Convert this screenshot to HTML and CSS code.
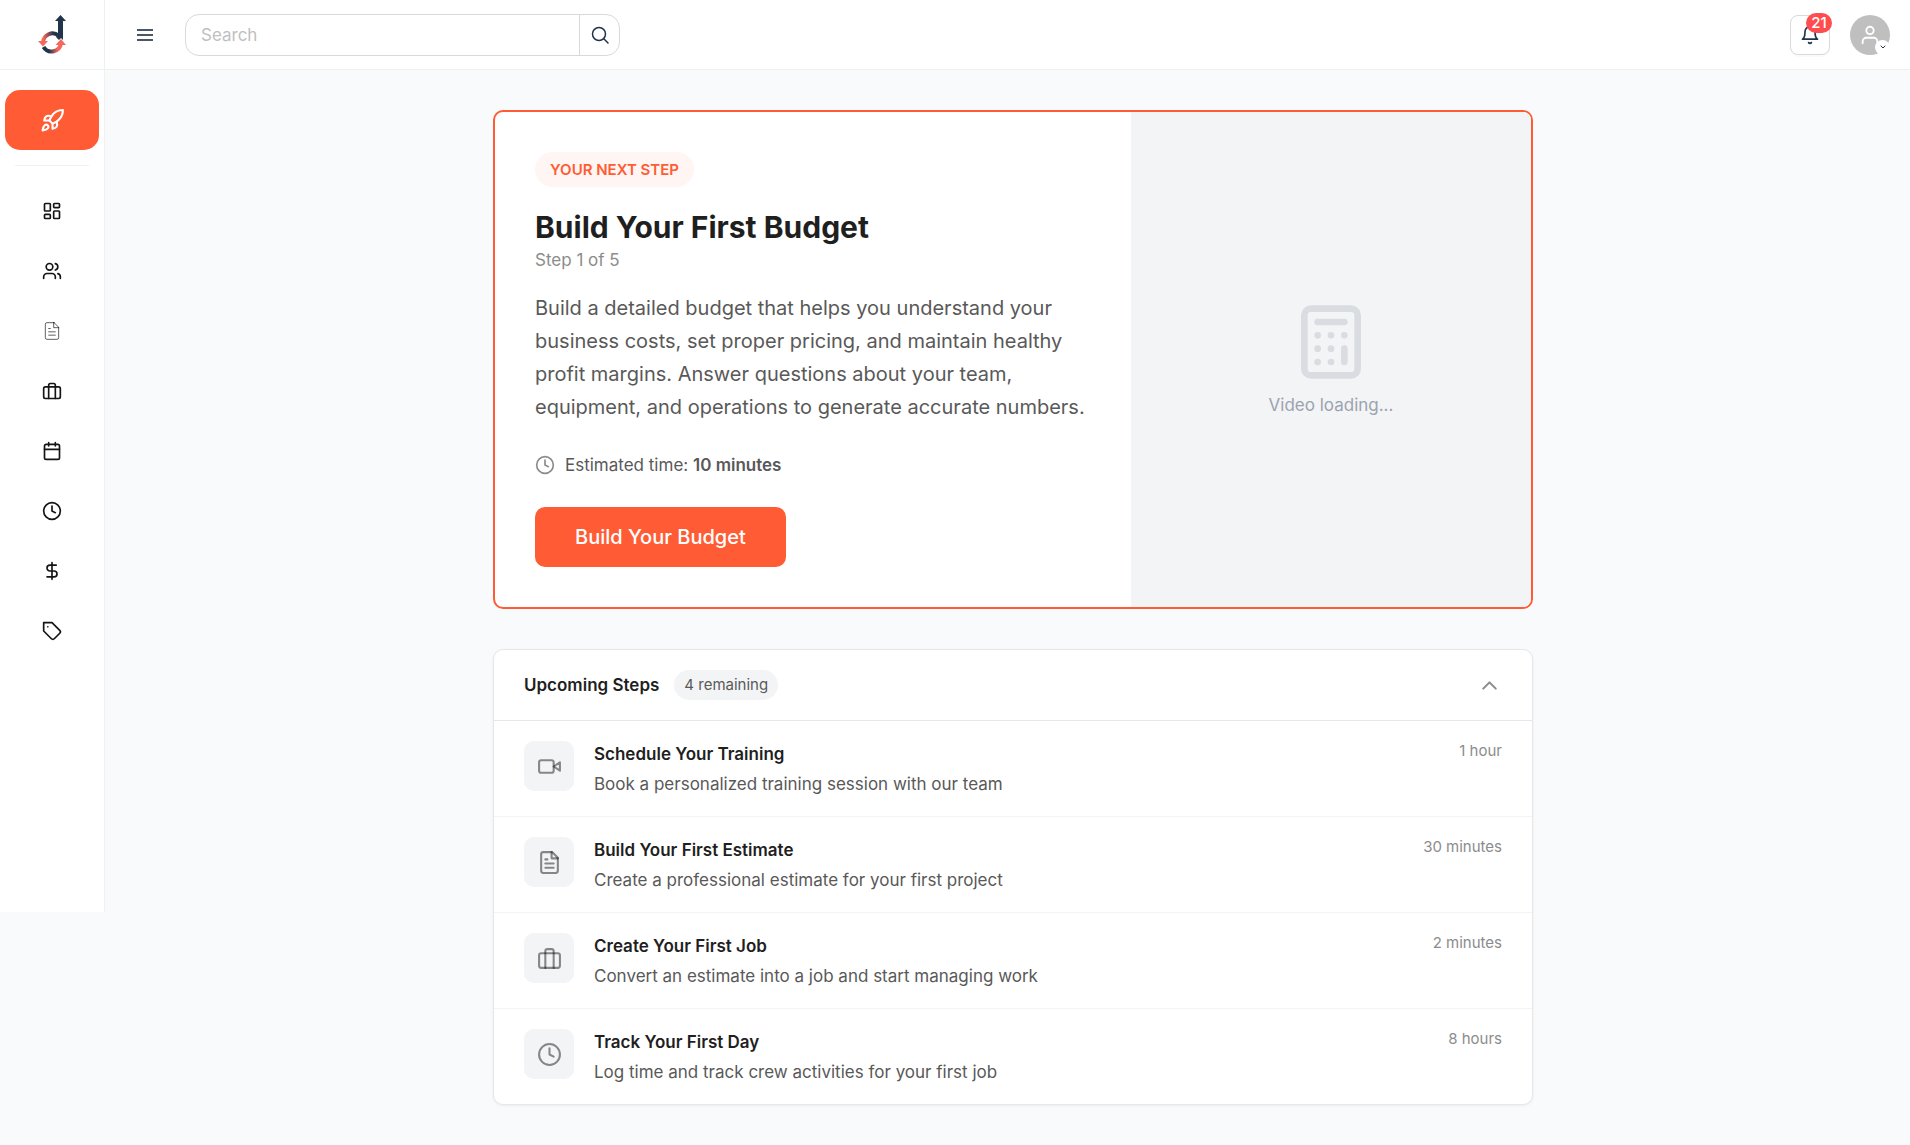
FILE: index.html
```html
<!DOCTYPE html>
<html lang="en">
<head>
<meta charset="utf-8">
<meta name="viewport" content="width=device-width, initial-scale=1">
<title>Getting started</title>
<link rel="stylesheet" href="styles.css">
</head>
<body>
<svg class="sprite" aria-hidden="true">
  <symbol id="rocket" viewBox="0 0 24 24"><path d="M4.5 16.5c-1.5 1.26-2 5-2 5s3.740-.5 5-2c.71-.84.7-2.130-.09-2.910a2.180 2.180 0 0 0-2.910-.09z"/><path d="m12 15-3-3a22 22 0 0 1 2-3.950A12.880 12.880 0 0 1 22 2c0 2.720-.78 7.500-6 11a22.350 22.350 0 0 1-4 2z"/><path d="M9 12H4s.55-3.030 2-4c1.620-1.080 5 0 5 0"/><path d="M12 15v5s3.030-.55 4-2c1.080-1.620 0-5 0-5"/></symbol>
  <symbol id="dashboard" viewBox="0 0 24 24"><rect x="3" y="3" width="7" height="9" rx="1"/><rect x="14" y="3" width="7" height="5" rx="1"/><rect x="14" y="12" width="7" height="9" rx="1"/><rect x="3" y="16" width="7" height="5" rx="1"/></symbol>
  <symbol id="users" viewBox="0 0 24 24"><path d="M16 21v-2a4 4 0 0 0-4-4H6a4 4 0 0 0-4 4v2"/><circle cx="9" cy="7" r="4"/><path d="M22 21v-2a4 4 0 0 0-3-3.870"/><path d="M16 3.130a4 4 0 0 1 0 7.750"/></symbol>
  <symbol id="file" viewBox="0 0 24 24"><path d="M14.500 2H6a2 2 0 0 0-2 2v16a2 2 0 0 0 2 2h12a2 2 0 0 0 2-2V7.500L14.500 2z"/><path d="M14 2v6h6"/><path d="M16 13H8"/><path d="M16 17H8"/><path d="M10 9H8"/></symbol>
  <symbol id="case" viewBox="0 0 24 24"><rect x="2" y="7" width="20" height="14" rx="2"/><path d="M16 21V5a2 2 0 0 0-2-2h-4a2 2 0 0 0-2 2v16"/></symbol>
  <symbol id="calendar" viewBox="0 0 24 24"><rect x="3" y="4" width="18" height="18" rx="2"/><path d="M16 2v4M8 2v4M3 10h18"/></symbol>
  <symbol id="clock" viewBox="0 0 24 24"><circle cx="12" cy="12" r="10"/><path d="M12 6v6l4 2"/></symbol>
  <symbol id="dollar" viewBox="0 0 24 24"><path d="M12 2v20"/><path d="M17 5H9.500a3.500 3.500 0 0 0 0 7h5a3.500 3.500 0 0 1 0 7H6"/></symbol>
  <symbol id="tag" viewBox="0 0 24 24"><path d="M12 2H2v10l9.290 9.290c.94.94 2.480.94 3.420 0l6.580-6.580c.94-.94.94-2.480 0-3.420L12 2Z"/><path d="M7 7h.01"/></symbol>
  <symbol id="video" viewBox="0 0 24 24"><path d="m22 8-6 4 6 4V8Z"/><rect x="2" y="6" width="14" height="12" rx="2"/></symbol>
</svg>

<aside class="sidebar">
  <a class="brand" href="#" aria-label="Home">
    <svg class="logo" viewBox="0 0 28 40" aria-hidden="true">
      <defs>
        <linearGradient id="arc-top" gradientUnits="userSpaceOnUse" x1="4" y1="0" x2="20" y2="0"><stop offset=".1" stop-color="#f4695c"/><stop offset=".7" stop-color="#22344c"/></linearGradient>
        <linearGradient id="arc-bottom" gradientUnits="userSpaceOnUse" x1="6" y1="0" x2="23" y2="0"><stop offset=".3" stop-color="#22344c"/><stop offset=".8" stop-color="#f4695c"/></linearGradient>
      </defs>
      <path fill="#22344c" d="M22.500 0l5.500 6h-3v19l-2-2-2 2-3-3 2-3V6h-3z"/>
      <path class="logo-arc" stroke="url(#arc-top)" d="M5 27.500a9.500 9.500 0 0 1 15.500-7"/>
      <path fill="#f4695c" d="M0 26l10 0-5 5.500z"/>
      <path class="logo-arc" stroke="url(#arc-bottom)" d="M5.500 32a9.500 9.500 0 0 0 17.500-4"/>
      <path fill="#f4695c" d="M17.500 30l5.500-6 5 6z"/>
    </svg>
  </a>
  <nav class="nav" aria-label="Main">
    <a class="nav-active" href="#" aria-label="Getting started"><svg class="icon icon-lg"><use href="#rocket"/></svg></a>
    <hr class="nav-divider">
    <a class="nav-item" href="#" aria-label="Dashboard"><svg class="icon"><use href="#dashboard"/></svg></a>
    <a class="nav-item" href="#" aria-label="Customers"><svg class="icon"><use href="#users"/></svg></a>
    <a class="nav-item nav-item-muted" href="#" aria-label="Estimates"><svg class="icon"><use href="#file"/></svg></a>
    <a class="nav-item" href="#" aria-label="Jobs"><svg class="icon"><use href="#case"/></svg></a>
    <a class="nav-item" href="#" aria-label="Schedule"><svg class="icon"><use href="#calendar"/></svg></a>
    <a class="nav-item" href="#" aria-label="Time"><svg class="icon"><use href="#clock"/></svg></a>
    <a class="nav-item" href="#" aria-label="Budget"><svg class="icon"><use href="#dollar"/></svg></a>
    <a class="nav-item" href="#" aria-label="Catalog"><svg class="icon"><use href="#tag"/></svg></a>
  </nav>
</aside>

<div class="page">
  <header class="topbar">
    <button class="menu-btn" type="button" aria-label="Toggle menu"><svg viewBox="0 0 16 12" aria-hidden="true"><path d="M0 1h16M0 6h16M0 11h16"/></svg></button>
    <form class="search" role="search">
      <input type="search" placeholder="Search" aria-label="Search">
      <button type="button" aria-label="Submit search"><svg viewBox="0 0 18 18" aria-hidden="true"><circle cx="8" cy="8" r="6.500"/><path d="M12.800 12.800L17 17"/></svg></button>
    </form>
    <div class="topbar-end">
      <button class="bell" type="button" aria-label="Notifications, 21 new">
        <svg viewBox="0 0 24 24" aria-hidden="true"><path d="M6 8a6 6 0 0 1 12 0c0 7 3 9 3 9H3s3-2 3-9"/><path d="M10.300 21a1.940 1.940 0 0 0 3.400 0"/></svg>
        <span class="bell-count">21</span>
      </button>
      <button class="avatar" type="button" aria-label="Account">
        <svg class="avatar-icon" viewBox="0 0 24 24" aria-hidden="true"><path d="M20 21v-2a4 4 0 0 0-4-4H8a4 4 0 0 0-4 4v2"/><circle cx="12" cy="7" r="4"/></svg>
        <span class="avatar-more"><svg viewBox="0 0 8 6" aria-hidden="true"><path d="M2 2l2 2 2-2"/></svg></span>
      </button>
    </div>
  </header>

  <main class="content">
    <section class="hero">
      <div class="hero-body">
        <span class="hero-badge">YOUR NEXT STEP</span>
        <h1 class="hero-title">Build Your First Budget</h1>
        <p class="hero-step">Step 1 of 5</p>
        <p class="hero-text">Build a detailed budget that helps you understand your business costs, set proper pricing, and maintain healthy profit margins. Answer questions about your team, equipment, and operations to generate accurate numbers.</p>
        <p class="hero-time"><svg class="icon"><use href="#clock"/></svg><span>Estimated time: <strong>10 minutes</strong></span></p>
        <button class="hero-btn" type="button">Build Your Budget</button>
      </div>
      <div class="hero-media">
        <svg class="calc" viewBox="0 0 24 24" aria-hidden="true"><rect x="4" y="2" width="16" height="20" rx="2"/><path d="M8 6h8M16 14v4M16 10h.01M12 10h.01M8 10h.01M12 14h.01M8 14h.01M12 18h.01M8 18h.01"/></svg>
        <p>Video loading...</p>
      </div>
    </section>

    <section class="steps">
      <div class="steps-head">
        <h2>Upcoming Steps</h2>
        <span class="steps-count">4 remaining</span>
        <button class="steps-toggle" type="button" aria-label="Collapse upcoming steps" aria-expanded="true"><svg viewBox="0 0 24 24" aria-hidden="true"><path d="m18 15-6-6-6 6"/></svg></button>
      </div>
      <ul class="steps-list">
        <li class="step">
          <span class="step-icon"><svg class="icon icon-lg"><use href="#video"/></svg></span>
          <div class="step-body"><h3>Schedule Your Training</h3><p>Book a personalized training session with our team</p></div>
          <span class="step-time">1 hour</span>
        </li>
        <li class="step">
          <span class="step-icon"><svg class="icon icon-lg"><use href="#file"/></svg></span>
          <div class="step-body"><h3>Build Your First Estimate</h3><p>Create a professional estimate for your first project</p></div>
          <span class="step-time">30 minutes</span>
        </li>
        <li class="step">
          <span class="step-icon"><svg class="icon icon-lg"><use href="#case"/></svg></span>
          <div class="step-body"><h3>Create Your First Job</h3><p>Convert an estimate into a job and start managing work</p></div>
          <span class="step-time">2 minutes</span>
        </li>
        <li class="step">
          <span class="step-icon"><svg class="icon icon-lg"><use href="#clock"/></svg></span>
          <div class="step-body"><h3>Track Your First Day</h3><p>Log time and track crew activities for your first job</p></div>
          <span class="step-time">8 hours</span>
        </li>
      </ul>
    </section>
  </main>
</div>
</body>
</html>
```
FILE: styles.css
```css
* { box-sizing: border-box; }

body {
  margin: 0;
  min-height: 100vh;
  display: flex;
  align-items: flex-start;
  background: #f9fafc;
  color: #1f1f1f;
  font-family: Inter, "Liberation Sans", sans-serif;
  font-size: 17px;
  line-height: 26px;
}

h1, h2, h3, p, ul { margin: 0; padding: 0; }
button { font: inherit; color: inherit; cursor: pointer; }
.sprite { display: none; }

svg { fill: none; stroke: currentColor; stroke-width: 2; stroke-linecap: round; stroke-linejoin: round; flex: none; }
.icon { width: 20px; height: 20px; }
.icon-lg { width: 25px; height: 25px; }

/* Sidebar */
.sidebar {
  flex: none;
  width: 105px;
  min-height: 912px;
  background: #fff;
  border-right: 1px solid #f0f0f0;
}
.brand {
  display: flex;
  align-items: center;
  justify-content: center;
  height: 70px;
  border-bottom: 1px solid #f0f0f0;
}
.logo { width: 28px; height: 40px; stroke: none; }
.logo-arc { stroke-width: 4; stroke-linecap: butt; }
.nav { padding: 20px 5px; }
.nav-active, .nav-item {
  display: flex;
  align-items: center;
  justify-content: center;
  height: 60px;
  border-radius: 15px;
  color: #141414;
}
.nav-active { background: #ff5c35; color: #fff; }
.nav-item-muted { color: rgba(0, 0, 0, 0.75); }
.nav-item-muted .icon { stroke-width: 1; }
.nav-divider { margin: 15px 10px; border: 0; height: 1px; background: #f0f0f0; }

/* Top bar */
.page { flex: 1; min-width: 0; }
.topbar {
  display: flex;
  align-items: center;
  height: 70px;
  padding: 0 20px 0 32px;
  background: #fff;
  border-bottom: 1px solid #f0f0f0;
}
.menu-btn { display: flex; padding: 0; border: 0; background: none; color: #4a5768; }
.menu-btn svg { width: 16px; height: 12px; stroke-linecap: butt; }
.search {
  display: flex;
  width: 435px;
  height: 42px;
  margin-left: 32px;
  border: 1px solid #d9d9d9;
  border-radius: 14px;
  overflow: hidden;
}
.search input {
  flex: 1;
  min-width: 0;
  padding: 0 15px;
  border: 0;
  outline: 0;
  background: none;
  font: inherit;
}
.search input::placeholder { color: #bfbfbf; opacity: 1; }
.search button {
  display: flex;
  align-items: center;
  justify-content: center;
  width: 40px;
  padding: 0;
  border: 0;
  border-left: 1px solid #d9d9d9;
  background: none;
  color: #22344c;
}
.search svg { width: 18px; height: 18px; stroke-width: 1.5; }
.topbar-end { display: flex; align-items: center; gap: 20px; margin-left: auto; }
.bell {
  position: relative;
  display: flex;
  align-items: center;
  justify-content: center;
  width: 40px;
  height: 40px;
  padding: 0;
  border: 1px solid #d9d9d9;
  border-radius: 8px;
  background: #fff;
  box-shadow: 0 2px 0 rgba(0, 0, 0, 0.02);
  color: #22344c;
}
.bell svg { width: 20px; height: 20px; }
.bell-count {
  position: absolute;
  top: -3px;
  right: -3px;
  min-width: 26px;
  border-radius: 10px;
  background: #ff4d4f;
  color: #fff;
  font-size: 15px;
  font-weight: 500;
  line-height: 20px;
  text-align: center;
}
.avatar {
  position: relative;
  display: flex;
  align-items: center;
  justify-content: center;
  width: 40px;
  height: 40px;
  padding: 0;
  border: 0;
  border-radius: 50%;
  background: #bfbfbf;
  color: #fff;
}
.avatar-icon { width: 22px; height: 22px; }
.avatar-more {
  position: absolute;
  right: 0;
  bottom: 0;
  display: flex;
  align-items: center;
  justify-content: center;
  width: 15px;
  height: 15px;
  border-radius: 50%;
  background: #fff;
  color: #22344c;
}
.avatar-more svg { width: 8px; height: 6px; stroke-width: 1; }

/* Content */
.content {
  display: grid;
  grid-template-columns: minmax(0, 1040px);
  justify-content: center;
  gap: 40px;
  padding: 40px 0 40px 11px;
}

.hero {
  display: flex;
  overflow: hidden;
  background: #fff;
  border: 2px solid #ff5c35;
  border-radius: 10px;
}
.hero-body { flex: 1; display: flex; flex-direction: column; align-items: flex-start; padding: 40px; }
.hero-badge {
  padding: 6px 15px;
  border-radius: 18px;
  background: #fff5f3;
  color: #ff5c35;
  font-size: 15px;
  font-weight: 600;
  line-height: 23px;
}
.hero-title { margin-top: 20px; font-size: 30px; font-weight: 700; line-height: 40px; }
.hero-step { color: #8c8c8c; }
.hero-text { margin-top: 19px; color: #595959; font-size: 20px; line-height: 33px; }
.hero-time { display: flex; align-items: center; gap: 10px; margin-top: 28px; color: #595959; }
.hero-time .icon { color: #8c8c8c; }
.hero-time strong { font-weight: 600; }
.hero-btn {
  height: 60px;
  margin-top: 29px;
  padding: 0 40px;
  border: 0;
  border-radius: 10px;
  background: #ff5c35;
  color: #fff;
  font-size: 20px;
  font-weight: 500;
}
.hero-media {
  display: flex;
  flex-direction: column;
  align-items: center;
  justify-content: center;
  gap: 10px;
  width: 400px;
  background: #f3f4f6;
  color: #9ca3af;
}
.calc { width: 80px; height: 80px; color: #d9dce1; }

.steps {
  background: #fff;
  border: 1px solid #e5e7eb;
  border-radius: 10px;
  box-shadow: 0 1px 3px rgba(0, 0, 0, 0.06);
}
.steps-head {
  display: flex;
  align-items: center;
  height: 71px;
  padding: 0 30px;
  border-bottom: 1px solid #e5e7eb;
}
.steps-head h2 { font-size: 17px; font-weight: 600; }
.steps-count {
  margin-left: 15px;
  padding: 4px 10px;
  border-radius: 15px;
  background: #f3f4f6;
  color: #595959;
  font-size: 15px;
  line-height: 22px;
}
.steps-toggle { display: flex; margin-left: auto; padding: 0; border: 0; background: none; color: #8c8c8c; }
.steps-toggle svg { width: 25px; height: 25px; }
.steps-list { list-style: none; }
.step { display: flex; gap: 20px; padding: 20px 30px 19px; border-bottom: 1px solid #f3f4f6; }
.step:last-child { border-bottom: 0; }
.step-icon {
  display: flex;
  align-items: center;
  justify-content: center;
  width: 50px;
  height: 50px;
  border-radius: 10px;
  background: #f3f4f6;
  color: rgba(0, 0, 0, 0.45);
}
.step-body { flex: 1; min-width: 0; }
.step-body h3 { font-size: 17px; font-weight: 600; line-height: 26px; }
.step-body p { margin-top: 4px; color: #595959; }
.step-time { color: #8c8c8c; font-size: 15px; line-height: 20px; }
```
